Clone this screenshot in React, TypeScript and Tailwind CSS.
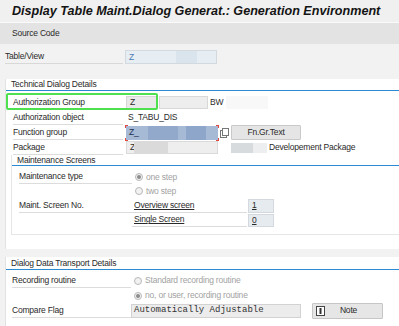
const Radio = ({ on }: { on?: boolean }) => (
  <span className="inline-flex items-center justify-center w-[8px] h-[8px] rounded-full border border-[#b8b8b8] bg-[#f2f2f2] mr-[3px]">
    {on && <span className="w-[4px] h-[4px] rounded-full bg-[#8c8c8c]" />}
  </span>
);

const Corners = () => (
  <>
    <span className="absolute -left-[1px] -top-[1px] w-[3px] h-[3px] border-l border-t border-[#e04848]" />
    <span className="absolute -left-[1px] -bottom-[1px] w-[3px] h-[3px] border-l border-b border-[#e04848]" />
    <span className="absolute -right-[1px] -top-[1px] w-[3px] h-[3px] border-r border-t border-[#e04848]" />
    <span className="absolute -right-[1px] -bottom-[1px] w-[3px] h-[3px] border-r border-b border-[#e04848]" />
  </>
);

export default function App() {
  return (
    <div className="w-[399px] h-[326px] overflow-hidden bg-[#f2f2f2] text-[8.5px] tracking-[-0.2px] leading-none text-[#2a2a2a] font-['Liberation_Sans',Arial,sans-serif]">
      {/* title */}
      <div className="h-[23px] flex items-center pl-[12px] bg-[#f0f0f0] border-b border-[#fafafa]">
        <span className="font-bold italic text-[12.6px] tracking-normal text-[#141414]">
          Display Table Maint.Dialog Generat.: Generation Environment
        </span>
      </div>
      {/* toolbar */}
      <div className="h-[21px] flex items-center pl-[12px] bg-[#e3e3e3]">
        <span>Source Code</span>
      </div>

      {/* table/view */}
      <div className="pt-[6px]">
        <div className="flex h-[14px] items-stretch">
          <div className="ml-[5px] w-[118px] flex items-center border-b border-[#d8d8d8]">Table/View</div>
          <div className="ml-[2px] w-[92px] flex border border-[#d2d9df] bg-[#e6edf3] text-[#4d7cb2]">
            <span className="w-[50px] pl-[3px] flex items-center">Z</span>
            <span className="w-[21px] bg-[#d9e4ed]" />
          </div>
        </div>
      </div>

      {/* Technical Dialog Details */}
      <div className="mt-[15px] ml-[5px] bg-white border-l border-[#e2e2e2] pb-[14px]">
        <div className="h-[12px] flex items-center pl-[5px] border-b border-[#2c8ad2]">Technical Dialog Details</div>
        <div className="pt-[4px]">
          <div className="relative flex h-[15px] items-center pl-[7px]">
            <span className="absolute left-0 -top-[2px] w-[152px] h-[17px] border-2 border-[#4fe04f] rounded-[2px] pointer-events-none" />
            <div className="w-[110px] h-full flex items-center border-b border-[#dcdcdc]">Authorization Group</div>
            <div className="ml-[3px] w-[32px] h-[13px] flex items-center pl-[3px] bg-[#e9e9e9] border border-[#d6d6d6]">Z</div>
            <div className="ml-[1px] w-[49px] h-[13px] bg-[#ededed] border border-[#d8d8d8]" />
            <span className="ml-[2px]">BW</span>
            <div className="ml-[3px] w-[42px] h-[13px] bg-[#f8f8f8]" />
          </div>
          <div className="flex h-[15px] items-center pl-[7px]">
            <div className="w-[110px] h-full flex items-center border-b border-[#dcdcdc]">Authorization object</div>
            <span className="ml-[5px]">S_TABU_DIS</span>
          </div>
          <div className="flex h-[15px] items-center pl-[7px]">
            <div className="w-[110px] h-full flex items-center border-b border-[#dcdcdc]">Function group</div>
            <div className="relative ml-[3px] w-[92px] h-[14px] flex bg-[#a6b9d5] text-[#1d2f4d]">
              <span className="w-[22px] pl-[3px] flex items-center">Z_</span>
              <span className="w-[30px] bg-[#92a9cb]" />
              <span className="w-[8px]" />
              <span className="w-[20px] bg-[#8ea6c9]" />
              <Corners />
            </div>
            <svg className="ml-[2px]" width="9" height="10" viewBox="0 0 9 10">
              <rect x="0.5" y="2.5" width="6" height="7" fill="#fff" stroke="#777" />
              <rect x="2.5" y="0.5" width="6" height="7" fill="#fff" stroke="#777" />
            </svg>
            <div className="ml-[2px] w-[70px] h-[15px] flex items-center justify-center bg-[#e5e5e5] border border-[#c9c9c9] rounded-[1px]">Fn.Gr.Text</div>
          </div>
          <div className="flex h-[15px] items-center pl-[7px]">
            <div className="w-[110px] h-full flex items-center border-b border-[#dcdcdc]">Package</div>
            <div className="ml-[3px] w-[92px] h-[13px] flex bg-[#eeeeee] border border-[#dadada]">
              <span className="w-[7px] pl-[3px] flex items-center">Z</span>
              <span className="w-[34px] bg-[#dadada]" />
            </div>
            <div className="ml-[13px] w-[22px] h-[10px] bg-[#d8dbde]" />
            <div className="w-[14px] h-[10px] bg-[#eceef0]" />
            <span className="ml-[2px]">Developement Package</span>
          </div>

          {/* Maintenance Screens */}
          <div className="ml-[5px] border-l border-b border-[#e6e6e6] pb-[7px]">
            <div className="h-[11px] flex items-center pl-[5px] border-b border-[#2c8ad2]">Maintenance Screens</div>
            <div className="pt-[4px]">
              <div className="flex h-[14px] items-center pl-[7px]">
                <div className="w-[113px] h-full flex items-center border-b border-[#dcdcdc]">Maintenance type</div>
                <span className="ml-[3px] flex items-center text-[#a2a2a2]"><Radio on />one step</span>
              </div>
              <div className="flex h-[14px] items-center pl-[7px]">
                <div className="w-[113px] h-full" />
                <span className="ml-[3px] flex items-center text-[#a2a2a2]"><Radio />two step</span>
              </div>
              <div className="flex h-[15px] items-center pl-[7px]">
                <div className="w-[113px] h-full flex items-center border-b border-[#dcdcdc]">Maint. Screen No.</div>
                <div className="w-[115px] h-full flex items-center pl-[2px] border-b border-[#dcdcdc] underline">Overview screen</div>
                <div className="ml-[1px] w-[26px] h-[14px] flex items-center pl-[3px] bg-[#e6ebf0] border border-[#d3d9df] underline">1</div>
              </div>
              <div className="flex h-[14px] items-center pl-[7px]">
                <div className="w-[113px] h-full" />
                <div className="w-[115px] h-full flex items-center pl-[2px] border-b border-[#dcdcdc] underline">Single Screen</div>
                <div className="ml-[1px] w-[26px] h-[13px] flex items-center pl-[3px] bg-[#e6ebf0] border border-[#d3d9df] underline">0</div>
              </div>
            </div>
          </div>
        </div>
      </div>

      {/* Dialog Data Transport Details */}
      <div className="mt-[8px] ml-[5px] bg-white border-l border-[#e2e2e2] h-[80px]">
        <div className="h-[13px] flex items-center pl-[5px] border-b border-[#2c8ad2]">Dialog Data Transport Details</div>
        <div className="pt-[3px]">
          <div className="flex h-[15px] items-center pl-[6px]">
            <div className="w-[119px] h-full flex items-center border-b border-[#dcdcdc]">Recording routine</div>
            <span className="ml-[3px] flex items-center text-[#a2a2a2]"><Radio />Standard recording routine</span>
          </div>
          <div className="flex h-[15px] items-center pl-[6px]">
            <div className="w-[119px] h-full" />
            <span className="ml-[3px] flex items-center text-[#a2a2a2]"><Radio on />no, or user, recording routine</span>
          </div>
          <div className="flex h-[15px] items-center pl-[6px]">
            <div className="w-[119px] h-full flex items-center border-b border-[#dcdcdc]">Compare Flag</div>
            <div className="w-[170px] h-[14px] flex items-center pl-[2px] bg-[#ececec] border border-[#d2d2d2] font-['Liberation_Mono',monospace] text-[9px] tracking-normal text-[#333]">Automatically Adjustable</div>
            <div className="ml-[11px] w-[71px] h-[16px] flex items-center bg-[#e6e6e6] border border-[#c6c6c6] rounded-[1px]">
              <svg className="ml-[3px]" width="9" height="10" viewBox="0 0 9 10">
                <rect x="0.5" y="0.5" width="8" height="9" fill="#fff" stroke="#444" />
                <rect x="3.5" y="2" width="2" height="6" fill="#333" />
              </svg>
              <span className="flex-1 text-center pr-[10px]">Note</span>
            </div>
          </div>
        </div>
      </div>
    </div>
  );
}
